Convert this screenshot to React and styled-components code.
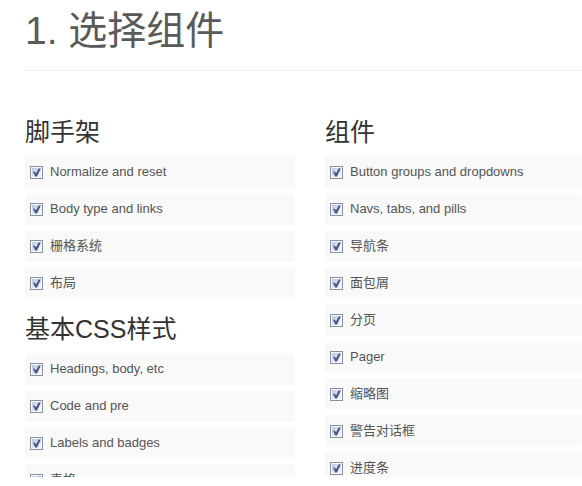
import React, { useState } from "react";
import styled, { createGlobalStyle } from "styled-components";

const GlobalStyle = createGlobalStyle`
  * { box-sizing: border-box; }
  body {
    margin: 0;
    background: #fff;
    color: #5a5a5a;
    font-family: "Liberation Sans", "Noto Sans CJK SC", sans-serif;
    font-size: 13px;
    line-height: 18px;
  }
`;

const Page = styled.main`
  height: calc(100vh - 9px);
  overflow: hidden;
  padding-left: 25px;
`;

const PageHeader = styled.header`
  padding: 11px 0 19px;
  margin-bottom: 40px;
  border-bottom: 1px solid #eee;
`;

const Title = styled.h1`
  margin: 0;
  font-size: 39px;
  font-weight: 400;
  line-height: 40px;
`;

const Columns = styled.div`
  display: grid;
  grid-template-columns: 270px minmax(0, 1fr);
  column-gap: 30px;
  align-items: start;
`;

const GroupTitle = styled.h3`
  margin: 0 0 3px;
  color: #333;
  font-size: 25px;
  font-weight: 400;
  line-height: 42px;
`;

const OptionList = styled.div`
  display: grid;
  row-gap: 5px;
  margin-bottom: 9px;
`;

const Option = styled.label`
  display: flex;
  align-items: center;
  gap: 7px;
  height: 32px;
  padding: 0 5px;
  border-radius: 3px;
  background: #f9f9f9;
  color: #555;
  white-space: nowrap;
`;

const CheckBox = styled.span`
  display: grid;
  width: 13px;
  height: 13px;
  margin-top: 1px;
  > * { grid-area: 1 / 1; }
`;

const CheckInput = styled.input`
  appearance: none;
  width: 13px;
  height: 13px;
  margin: 0;
  border: 1px solid #8a90a2;
  background: linear-gradient(135deg, #bcc6da, #f0f3f9 80%) center / 9px 9px no-repeat #f7f8fa;
`;

const Tick = styled.svg`
  width: 13px;
  height: 13px;
  pointer-events: none;
`;

const OptionText = styled.span`
  padding-bottom: 1px;
`;

const leftGroups = [
  { title: "脚手架", items: ["Normalize and reset", "Body type and links", "栅格系统", "布局"] },
  { title: "基本CSS样式", items: ["Headings, body, etc", "Code and pre", "Labels and badges", "表格"] },
];

const rightGroups = [
  {
    title: "组件",
    items: [
      "Button groups and dropdowns",
      "Navs, tabs, and pills",
      "导航条",
      "面包屑",
      "分页",
      "Pager",
      "缩略图",
      "警告对话框",
      "进度条",
    ],
  },
];

function ComponentOption({ label }) {
  const [checked, setChecked] = useState(true);
  return (
    <Option>
      <CheckBox>
        <CheckInput type="checkbox" checked={checked} onChange={() => setChecked(!checked)} />
        {checked && (
          <Tick viewBox="0 0 13 13" aria-hidden="true">
            <path d="M3 5.8 L5 5.8 L6 7.6 L8.6 2.4 L10.8 2.4 L7 10.6 L5.2 10.6 Z" fill="#47568a" />
          </Tick>
        )}
      </CheckBox>
      <OptionText>{label}</OptionText>
    </Option>
  );
}

function Column({ groups }) {
  return (
    <div>
      {groups.map((group) => (
        <section key={group.title}>
          <GroupTitle>{group.title}</GroupTitle>
          <OptionList>
            {group.items.map((item) => (
              <ComponentOption key={item} label={item} />
            ))}
          </OptionList>
        </section>
      ))}
    </div>
  );
}

export default function App() {
  return (
    <>
      <GlobalStyle />
      <Page>
        <PageHeader>
          <Title>1. 选择组件</Title>
        </PageHeader>
        <Columns>
          <Column groups={leftGroups} />
          <Column groups={rightGroups} />
        </Columns>
      </Page>
    </>
  );
}
